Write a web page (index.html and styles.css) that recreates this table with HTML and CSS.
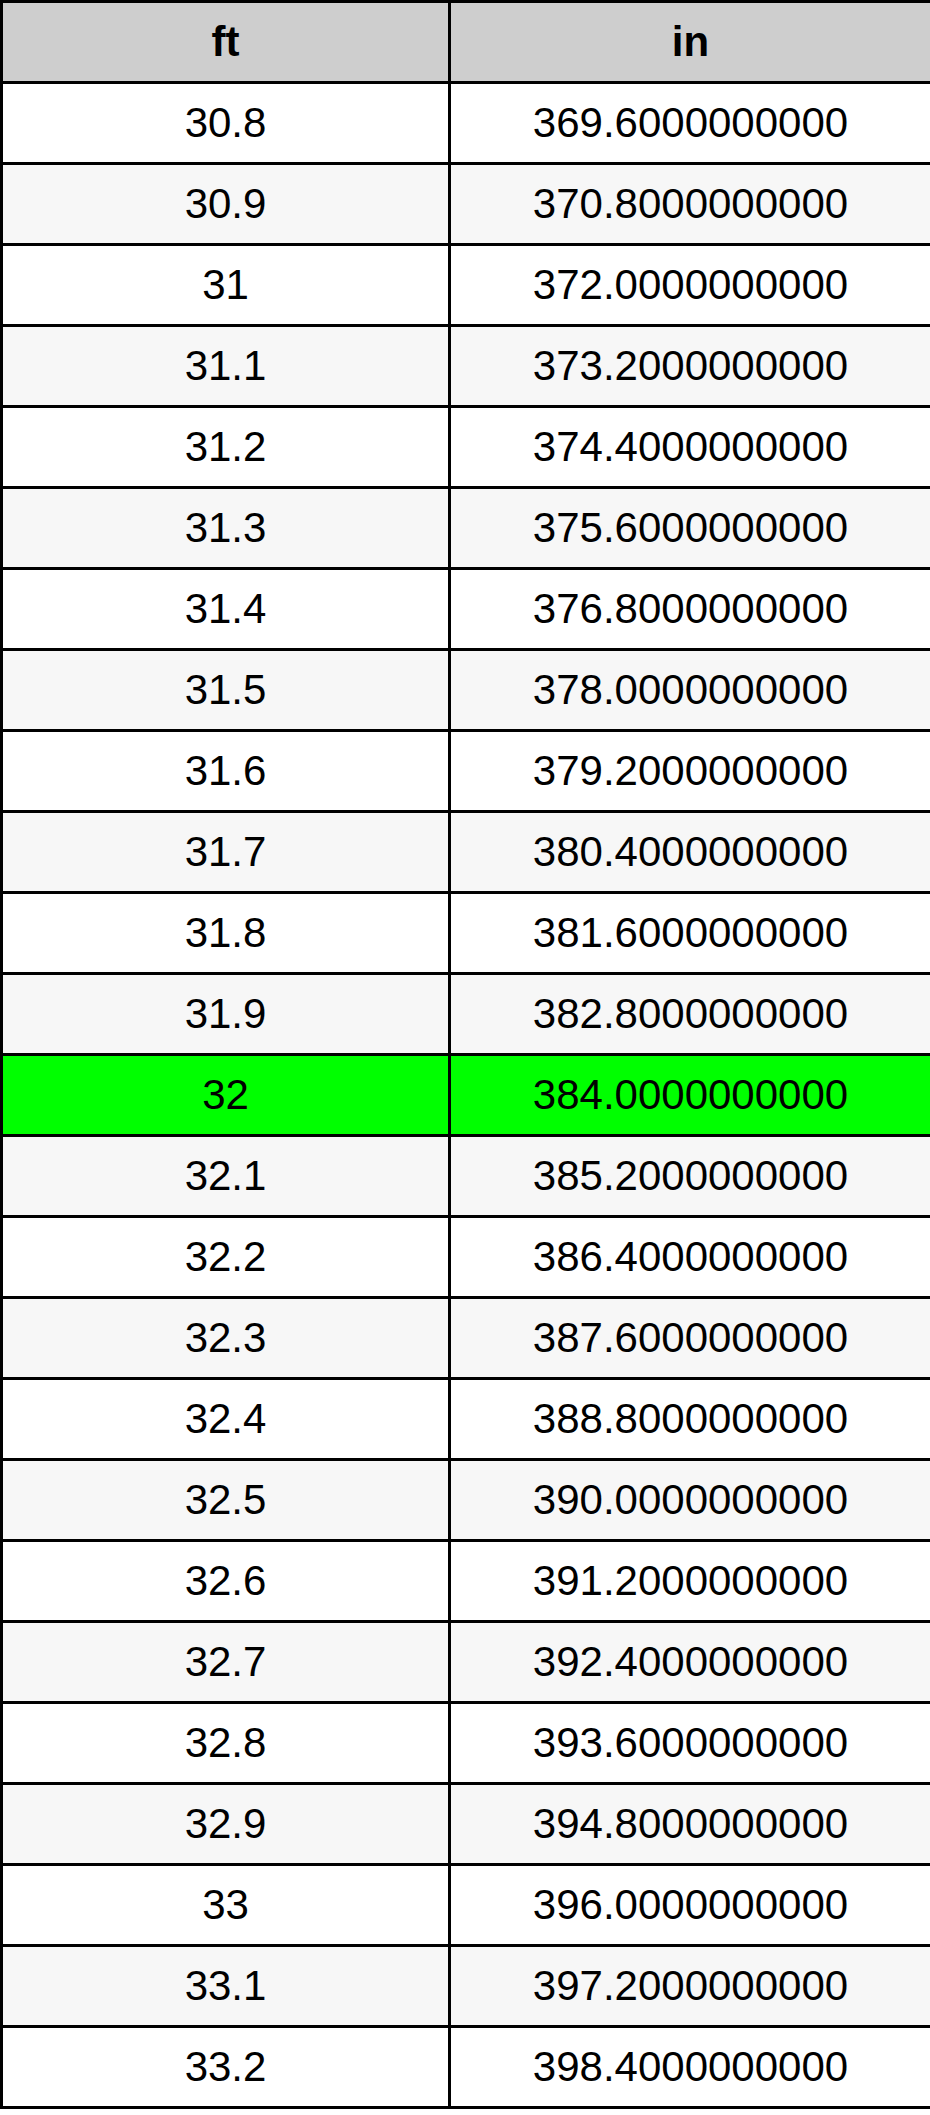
FILE: index.html
```html
<!DOCTYPE html>
<html>
<head>
<meta charset="utf-8">
<link rel="stylesheet" href="styles.css">
</head>
<body>
<table class="conv">
<colgroup><col class="c1"><col class="c2"></colgroup>
<thead><tr><th>ft</th><th>in</th></tr></thead>
<tbody>
<tr><td>30.8</td><td>369.6000000000</td></tr>
<tr class="alt"><td>30.9</td><td>370.8000000000</td></tr>
<tr><td>31</td><td>372.0000000000</td></tr>
<tr class="alt"><td>31.1</td><td>373.2000000000</td></tr>
<tr><td>31.2</td><td>374.4000000000</td></tr>
<tr class="alt"><td>31.3</td><td>375.6000000000</td></tr>
<tr><td>31.4</td><td>376.8000000000</td></tr>
<tr class="alt"><td>31.5</td><td>378.0000000000</td></tr>
<tr><td>31.6</td><td>379.2000000000</td></tr>
<tr class="alt"><td>31.7</td><td>380.4000000000</td></tr>
<tr><td>31.8</td><td>381.6000000000</td></tr>
<tr class="alt"><td>31.9</td><td>382.8000000000</td></tr>
<tr class="hl"><td>32</td><td>384.0000000000</td></tr>
<tr class="alt"><td>32.1</td><td>385.2000000000</td></tr>
<tr><td>32.2</td><td>386.4000000000</td></tr>
<tr class="alt"><td>32.3</td><td>387.6000000000</td></tr>
<tr><td>32.4</td><td>388.8000000000</td></tr>
<tr class="alt"><td>32.5</td><td>390.0000000000</td></tr>
<tr><td>32.6</td><td>391.2000000000</td></tr>
<tr class="alt"><td>32.7</td><td>392.4000000000</td></tr>
<tr><td>32.8</td><td>393.6000000000</td></tr>
<tr class="alt"><td>32.9</td><td>394.8000000000</td></tr>
<tr><td>33</td><td>396.0000000000</td></tr>
<tr class="alt"><td>33.1</td><td>397.2000000000</td></tr>
<tr><td>33.2</td><td>398.4000000000</td></tr>
</tbody>
</table>
</body>
</html>
```
FILE: styles.css
```css
html, body {
  margin: 0;
  padding: 0;
  background: #ffffff;
}
.conv {
  width: 930px;
  border-collapse: collapse;
  table-layout: fixed;
  font-family: "Liberation Sans", Arial, sans-serif;
  font-size: 42px;
  color: #000;
}
.c1 { width: 448px; }
.c2 { width: 482px; }
.conv th, .conv td {
  border: 3px solid #000;
  height: 81px;
  padding: 0;
  text-align: center;
  vertical-align: middle;
  box-sizing: border-box;
}
.conv th {
  background: #cecece;
  font-weight: bold;
}
.conv tr.alt td { background: #f7f7f7; }
.conv tr.hl td { background: #00ff00; }
```
